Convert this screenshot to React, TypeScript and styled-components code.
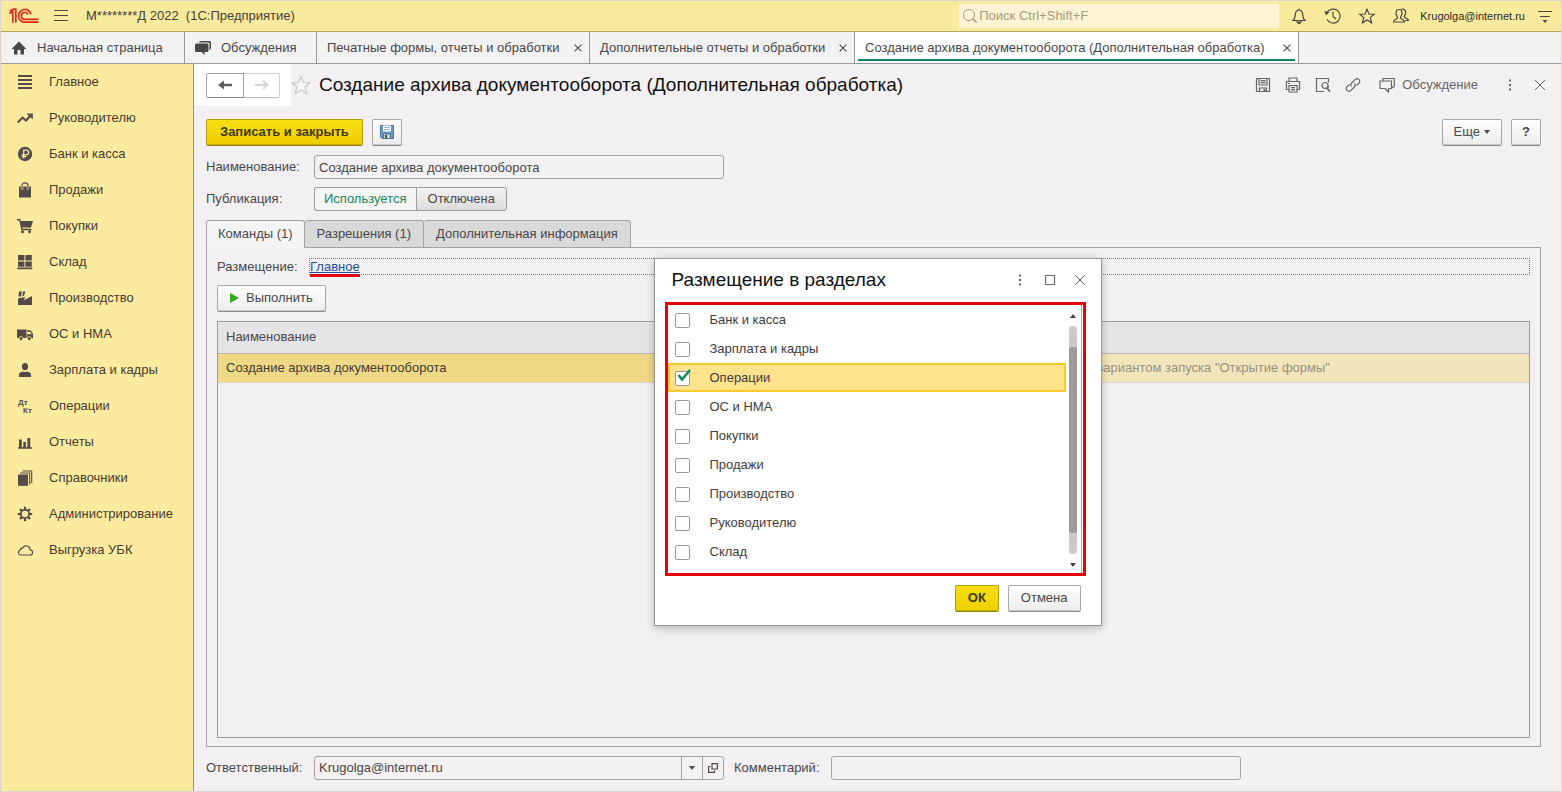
import React from "react";
import styled, { createGlobalStyle, css } from "styled-components";

const GlobalStyle = createGlobalStyle`
  * { box-sizing: border-box; }
  html, body { margin: 0; padding: 0; }
  body, button, input {
    font-family: "Liberation Sans", Arial, sans-serif;
    font-size: 13px;
    line-height: 16px;
    color: #4a4748;
  }
  button { cursor: pointer; }
`;

/* ---------- window frame ---------- */

const Page = styled.div`
  display: flex;
  flex-direction: column;
  min-height: 100vh;
  background: #f2f0f2;
  border: 1px solid #dcd6cc;
`;

const TopBar = styled.header`
  display: flex;
  align-items: center;
  height: 31px;
  padding: 0 9px 0 8px;
  background: #f9eb9e;
  border-bottom: 1px solid #b9a46a;
`;

const IconButton = styled.button`
  display: inline-flex;
  align-items: center;
  justify-content: center;
  padding: 0;
  border: 0;
  background: none;
  color: #4f4645;
  flex: none;
`;

const AppTitle = styled.span`
  flex: 1;
  margin-left: 17px;
  white-space: pre;
  color: #45403a;
`;

const Search = styled.label`
  display: flex;
  align-items: center;
  width: 320px;
  height: 24px;
  padding-left: 3px;
  background: #fcf4d2;
  color: #a39c80;

  input {
    flex: 1;
    min-width: 0;
    padding: 0 1px;
    border: 0;
    outline: 0;
    background: none;
  }
  input::placeholder { color: #a39c80; opacity: 1; }
`;

const TopTools = styled.div`
  display: flex;
  align-items: center;
  gap: 16px;
  margin-left: 11px;
`;

const UserLink = styled.a`
  font-size: 11px;
  color: #2e2a24;
  text-decoration: none;
  margin: 0 -3px 0 -6px;
`;

/* ---------- open window tabs ---------- */

const WindowTabs = styled.nav`
  display: flex;
  height: 32px;
  background: #f3f2f3;
  border-bottom: 1px solid #9b9998;
`;

const WindowTab = styled.div<{ $width: number; $active?: boolean; $section?: boolean }>`
  display: flex;
  align-items: center;
  justify-content: ${(p) => (p.$section ? "flex-start" : "space-between")};
  min-width: ${(p) => p.$width}px;
  padding: 0 7px 0 10px;
  gap: 10px;
  border-right: 1px solid #9b9998;
  color: #4a4748;
  white-space: nowrap;
  ${(p) =>
    p.$active &&
    css`
      background: linear-gradient(#138660, #138660) 3px 27px / calc(100% - 6px) 2px no-repeat #fff;
    `}

  a { color: inherit; text-decoration: none; }
`;

/* ---------- sections panel ---------- */

const Body = styled.div`
  display: flex;
  flex: 1;
`;

const Sidebar = styled.nav`
  flex: none;
  width: 193px;
  background: #faeb9f;
  border-right: 1px solid #a98d6a;
`;

const SectionLink = styled.a`
  display: flex;
  align-items: center;
  gap: 16px;
  height: 36px;
  padding-left: 16px;
  color: #4a3a30;
  text-decoration: none;
  white-space: nowrap;

  svg { color: #544a4a; flex: none; }
`;

/* ---------- form ---------- */

const Main = styled.main`
  position: relative;
  display: flex;
  flex: 1;
  flex-direction: column;
  min-width: 0;
  padding: 0 20px 11px 12px;
`;

const FormHeader = styled.div`
  display: flex;
  align-items: center;
  height: 42px;
  margin-bottom: 13px;
`;

const History = styled.div`
  display: flex;
  align-items: center;
  height: 42px;
  margin-left: -12px;
  padding: 0 11px 0 12px;
  background: #fff;
`;

const HistoryButton = styled.button<{ $dim?: boolean }>`
  display: flex;
  align-items: center;
  justify-content: center;
  width: ${(p) => (p.$dim ? "36px" : "38px")};
  height: 25px;
  padding: 0;
  background: #fff;
  border: 1px solid ${(p) => (p.$dim ? "#cfcfcf" : "#a0a0a0")};
  border-bottom-color: ${(p) => (p.$dim ? "#bdbdbd" : "#8a8a8a")};
  border-left-width: ${(p) => (p.$dim ? "0" : "1px")};
  border-radius: ${(p) => (p.$dim ? "0 2px 2px 0" : "2px 0 0 2px")};
  color: ${(p) => (p.$dim ? "#d6d6d6" : "#5c5c5c")};
`;

const FormTitle = styled.h1`
  flex: 1;
  margin: 0 0 0 8px;
  font-size: 19px;
  line-height: 24px;
  font-weight: 400;
  color: #111;
  white-space: nowrap;
`;

const FormTools = styled.div`
  display: flex;
  align-items: center;
  gap: 14px;
  margin-right: -7px;

  button { color: #666; }
`;

const DiscussButton = styled(IconButton)`
  gap: 7px;
  margin: 0 10px 0 4px;
`;

const Toolbar = styled.div`
  display: flex;
  gap: 9px;
  margin-bottom: 9px;
`;

const Spacer = styled.span`
  flex: 1;
`;

const Button = styled.button<{ $tone?: "primary"; $pad?: number; $gap?: number }>`
  display: inline-flex;
  align-items: center;
  justify-content: center;
  gap: ${(p) => p.$gap ?? 7}px;
  height: 27px;
  padding: 0 ${(p) => p.$pad ?? 12}px 1px;
  border: 1px solid #a9a7a9;
  border-bottom-color: #8a888a;
  border-radius: 2px;
  background: linear-gradient(#fefefe, #ececec);
  box-shadow: inset 0 -1px 0 #c9c7c9;
  white-space: nowrap;
  ${(p) =>
    p.$tone === "primary" &&
    css`
      font-weight: 700;
      color: #43390a;
      border-color: #b09c10;
      border-bottom-color: #8f7e10;
      background: linear-gradient(#f8de12, #edcf00);
      box-shadow: inset 0 -1px 0 #c9b208;
    `}
`;

const FieldRow = styled.div`
  display: flex;
  align-items: center;
  margin-bottom: 8px;
`;

const FooterRow = styled.div`
  display: flex;
  align-items: center;
`;

const FieldLabel = styled.label`
  flex: none;
  width: 108px;
  white-space: nowrap;
`;

const fieldFrame = css`
  height: 24px;
  border: 1px solid #a3a1a3;
  border-radius: 3px;
  background: #f3f1f3;
`;

const TextInput = styled.input`
  ${fieldFrame}
  width: 410px;
  padding: 0 4px;
  outline: 0;
`;

const Combo = styled.div`
  ${fieldFrame}
  display: flex;
  width: 410px;

  input {
    flex: 1;
    min-width: 0;
    padding: 0 4px;
    border: 0;
    outline: 0;
    background: none;
  }
  button {
    width: 21px;
    border-left: 1px solid #a3a1a3;
  }
`;

const CommentLabel = styled.label`
  margin: 0 11px 0 10px;
`;

const Switch = styled.div`
  display: flex;
  height: 24px;
`;

const SwitchButton = styled.button<{ $on?: boolean }>`
  padding: 0 ${(p) => (p.$on ? "9px" : "11px")};
  border: 1px solid #9d9b9d;
  border-radius: ${(p) => (p.$on ? "3px 0 0 3px" : "0 3px 3px 0")};
  border-right-width: ${(p) => (p.$on ? "0" : "1px")};
  background: ${(p) => (p.$on ? "#f6f5f6" : "linear-gradient(#f2f2f2, #dcdcdc)")};
  color: ${(p) => (p.$on ? "#16885a" : "#4a4748")};
`;

const PageTabs = styled.div`
  display: flex;
  height: 28px;
  margin: 1px 0 -1px;
  z-index: 1;
`;

const PageTab = styled.button<{ $active?: boolean }>`
  padding: 0 ${(p) => (p.$active ? "11px" : "12px")};
  border: 1px solid #a3a1a3;
  border-left-width: ${(p) => (p.$active ? "1px" : "0")};
  border-bottom-color: ${(p) => (p.$active ? "#f5f4f5" : "#a3a1a3")};
  border-radius: 3px 3px 0 0;
  background: ${(p) => (p.$active ? "#f5f4f5" : "#d9d9d9")};
  white-space: nowrap;
`;

const Panel = styled.section`
  display: flex;
  flex: 1;
  flex-direction: column;
  padding: 10px 10px 8px;
  margin-bottom: 9px;
  border: 1px solid #a3a1a3;
`;

const PlacementRow = styled.div`
  display: flex;
  align-items: center;
  margin-bottom: 10px;
`;

const PlacementLabel = styled.span`
  width: 92px;
`;

const PlacementBox = styled.div`
  display: flex;
  flex: 1;
  height: 17px;
  border: 1px dotted #777;
`;

const PlacementLink = styled.a`
  height: 18px;
  color: #23509b;
  text-decoration: underline;
  border-bottom: 3px solid #e30613;
`;

const ButtonRow = styled.div`
  display: flex;
  margin-bottom: 9px;
`;

const TableFrame = styled.div`
  flex: 1;
  border: 1px solid #9b9a9c;
`;

const Table = styled.table`
  width: 100%;
  table-layout: fixed;
  border-collapse: collapse;

  th, td {
    padding: 0 8px;
    text-align: left;
    font-weight: 400;
    white-space: nowrap;
  }
  th {
    height: 31px;
    background: #e6e4e6;
    border-bottom: 1px solid #b5b4b4;
  }
  th:first-child { width: 53%; }
  td {
    height: 29px;
    background: #efd987;
    color: #443c33;
    border-bottom: 1px solid #d9d6cc;
  }
  td:last-child {
    background: #f2e5bc;
    color: #979080;
  }
`;

/* ---------- placement dialog ---------- */

const DialogLayer = styled.div`
  position: absolute;
  inset: 28px 0 0 0;
  display: flex;
  align-items: center;
  justify-content: center;
  z-index: 2;
`;

const Dialog = styled.section`
  display: flex;
  flex-direction: column;
  width: 448px;
  padding: 0 15px 13px 10px;
  background: #fff;
  border: 1px solid #98969a;
  box-shadow: 0 2px 8px rgba(0, 0, 0, 0.25);
`;

const DialogHeader = styled.div`
  display: flex;
  align-items: center;
  height: 43px;
  margin-right: -2px;
  padding-left: 7px;
  gap: 14px;

  h2 {
    flex: 1;
    margin: 0;
    font-size: 19px;
    line-height: 24px;
    font-weight: 400;
    color: #111;
  }
  button { color: #666; }
`;

const Highlight = styled.div`
  display: flex;
  height: 274px;
  border: 3px solid #e60009;
`;

const SectionList = styled.ul`
  flex: 1;
  margin: 0;
  padding: 0;
  list-style: none;
`;

const SectionOption = styled.li<{ $selected?: boolean }>`
  height: 29px;
  border: 2px solid ${(p) => (p.$selected ? "#f6c92e" : "transparent")};
  background: ${(p) => (p.$selected ? "#fee28c" : "none")};

  label {
    position: relative;
    display: flex;
    align-items: center;
    gap: 20px;
    height: 100%;
    padding: 2px 0 0 5px;
    color: #3f3c3d;
  }
  svg {
    position: absolute;
    left: 6px;
    top: 3px;
    pointer-events: none;
  }
`;

const Checkbox = styled.input`
  appearance: none;
  width: 15px;
  height: 15px;
  margin: 0;
  border: 1px solid #9a989a;
  border-radius: 2px;
  background: #fff;
`;

const ScrollBar = styled.div`
  display: flex;
  flex-direction: column;
  align-items: center;
  width: 16px;
  margin-right: 1px;
  padding: 9px 4px 6px 3px;
  border-right: 1px solid #a3a1a3;
  color: #444;
`;

const ScrollTrack = styled.div`
  flex: 1;
  width: 8px;
  margin: 8px 0 9px;
  padding: 21px 0;
  border-radius: 4px;
  background: #cbcacb;
`;

const ScrollThumb = styled.div`
  height: 100%;
  border-radius: 2px;
  background: #9d9b9d;
`;

const DialogButtons = styled.div`
  display: flex;
  justify-content: flex-end;
  gap: 9px;
  margin: 9px 5px 0 0;
`;

/* ---------- icons ---------- */

const Icon = ({ size = 16, fill, width = 1, children }: { size?: number; fill?: boolean; width?: number; children: React.ReactNode }) => (
  <svg
    width={size}
    height={size}
    viewBox={`0 0 ${size} ${size}`}
    fill={fill ? "currentColor" : "none"}
    stroke={fill ? "none" : "currentColor"}
    strokeWidth={width}
    aria-hidden="true"
  >
    {children}
  </svg>
);

const Logo = () => (
  <svg width="30" height="16" viewBox="0 0 30 16" fill="none" stroke="#dc2a1c" strokeWidth="1.7" aria-label="1C">
    <path d="M0.5 5.4 L3.8 3.4 V14.8 M0.6 3 L4.6 1.2 H6.8 V14.8" />
    <path d="M21.8 6.2 A6.2 6.4 0 1 0 15.800 14.200 H29.400" />
    <path d="M18.800 6.600 A3.300 3.500 0 1 0 15.800 11.300 H29.400" />
  </svg>
);

const CloseIcon = () => (
  <Icon size={8} width={1.1}>
    <path d="M.6 .6L7.4 7.4M7.4 .6L.6 7.4" />
  </Icon>
);

const DotsIcon = () => (
  <Icon fill>
    <path d="M7 2.5h2v2H7zM7 7h2v2H7zM7 11.5h2v2H7z" />
  </Icon>
);

const CaretIcon = ({ up }: { up?: boolean }) => (
  <svg width="6" height="4" viewBox="0 0 6 4" fill="currentColor" aria-hidden="true">
    <path d={up ? "M0 4L3 0L6 4z" : "M0 0H6L3 4z"} />
  </svg>
);

const StarPath = "M8 1.2 L10 6 L15.2 6.3 L11.2 9.6 L12.6 14.8 L8 11.9 L3.4 14.8 L4.8 9.6 L.8 6.3 L6 6 Z";

const gearTeeth = [0, 45, 90, 135, 180, 225, 270, 315];

const sections: { title: string; icon: React.ReactNode }[] = [
  { title: "Главное", icon: <Icon fill><path d="M1 1h14v2H1zM1 5h14v2H1zM1 9h14v2H1zM1 13h14v2H1z" /></Icon> },
  { title: "Руководителю", icon: <Icon width={2}><path d="M.7 12.5L5.5 7.5L9 10.5L14 5" /><path d="M9.5 3.5H15.8V9.5z" fill="currentColor" stroke="none" /></Icon> },
  {
    title: "Банк и касса",
    icon: (
      <Icon>
        <circle cx="8" cy="8" r="7.2" fill="currentColor" stroke="none" />
        <path d="M6.7 12.5V4.2H9.3A2.3 2.3 0 0 1 9.3 8.8H4.7M4.7 10.7H9.3" stroke="#faeb9f" strokeWidth="1.2" />
      </Icon>
    ),
  },
  { title: "Продажи", icon: <Icon><path d="M2 4.5H14V15.5H2z" fill="currentColor" stroke="none" /><path d="M5 7.5V3.5A3 2.6 0 0 1 11 3.5V7.5" stroke="#faeb9f" strokeWidth="2.4" /><path d="M5 7V3.6A3 2.7 0 0 1 11 3.6V7" strokeWidth="1.2" /></Icon> },
  { title: "Покупки", icon: <Icon><path d="M3.5 3H16L14 9.5H5z" fill="currentColor" stroke="none" /><path d="M0 1.7H2.8L5 11.5H14.5" strokeWidth="1.4" /><circle cx="5.5" cy="13.7" r="1.5" fill="currentColor" stroke="none" /><circle cx="12.5" cy="13.7" r="1.5" fill="currentColor" stroke="none" /></Icon> },
  { title: "Склад", icon: <Icon fill><path d="M1 1h6.4v5.5H1zM8.4 1h6.4v5.5H8.4zM1 7.4h6.4v5.3H1zM8.4 7.4h6.4v5.3H8.4zM.3 13.4h15v1.8H.3z" /></Icon> },
  { title: "Производство", icon: <Icon fill><path d="M1 8.500L8 7L7 10.300L15 6V15H1zM2 1.500H4.800L4.200 6.500H1.500zM6 1.500H8.600L6.800 6H5.500z" /></Icon> },
  { title: "ОС и НМА", icon: <Icon><path d="M0 3.5H9.5V12H0z" fill="currentColor" stroke="none" /><path d="M10 5H13.3L15.4 8V11.5H10" strokeWidth="1.3" /><path d="M10 8.2H15.5V12H10z" fill="currentColor" stroke="none" /><circle cx="4" cy="12.5" r="2" fill="currentColor" stroke="#faeb9f" strokeWidth="0.8" /><circle cx="12.3" cy="12.5" r="2" fill="currentColor" stroke="#faeb9f" strokeWidth="0.8" /></Icon> },
  { title: "Зарплата и кадры", icon: <Icon fill><ellipse cx="8" cy="4.6" rx="3.1" ry="3.7" /><path d="M2 15V12.4C2 10.6 4 10 6 9.4Q8 10.6 10 9.4C12 10 14 10.6 14 12.4V15z" /></Icon> },
  {
    title: "Операции",
    icon: (
      <Icon fill>
        <text x="1" y="7" fontSize="8" fontWeight="700">Дт</text>
        <text x="6" y="15" fontSize="8" fontWeight="700">Кт</text>
      </Icon>
    ),
  },
  { title: "Отчеты", icon: <Icon fill><path d="M1 13.3h14v1.4H1zM2 5.5h2.8v8H2zM6.3 8h2.6v6H6.3zM10.4 4h2.8v10h-2.8z" /></Icon> },
  { title: "Справочники", icon: <Icon><path d="M1 4.5H11V15.8H1z" fill="currentColor" stroke="none" /><path d="M3 3H12.7V14.5M5.5 1H14.7V13" strokeWidth="1.1" /></Icon> },
  {
    title: "Администрирование",
    icon: (
      <Icon>
        <circle cx="8" cy="8" r="4.2" strokeWidth="1.8" />
        {gearTeeth.map((a) => (
          <path key={a} d="M8 .8V3.4" strokeWidth="2.2" transform={`rotate(${a} 8 8)`} />
        ))}
      </Icon>
    ),
  },
  { title: "Выгрузка УБК", icon: <Icon width={1.2}><path d="M3.5 13H12.8A2.6 2.6 0 0 0 13.2 7.8A4 4 0 0 0 5.8 5.8A2.8 2.8 0 0 0 3 8.2A2.5 2.5 0 0 0 3.5 13z" /></Icon> },
];

const options = ["Банк и касса", "Зарплата и кадры", "Операции", "ОС и НМА", "Покупки", "Продажи", "Производство", "Руководителю", "Склад"];

const windows = [
  { title: "Печатные формы, отчеты и обработки", width: 273 },
  { title: "Дополнительные отчеты и обработки", width: 265 },
  { title: "Создание архива документооборота (Дополнительная обработка)", width: 444, active: true },
];

export default function App() {
  return (
    <Page>
      <GlobalStyle />
      <TopBar>
        <Logo />
        <IconButton aria-label="Меню">
          <svg width="30" height="14" viewBox="0 0 30 14" stroke="currentColor" strokeWidth="1.2" aria-hidden="true">
            <path d="M15 1.5H29M15 6.5H29M15 11.5H29" />
          </svg>
        </IconButton>
        <AppTitle>{"М********Д 2022  (1С:Предприятие)"}</AppTitle>
        <Search>
          <Icon><circle cx="7" cy="7" r="5.6" /><path d="M11 11L14.5 14.5" strokeWidth="1.6" /></Icon>
          <input type="search" placeholder="Поиск Ctrl+Shift+F" aria-label="Поиск" />
        </Search>
        <TopTools>
          <IconButton aria-label="Уведомления">
            <Icon size={18} width={1.2}><path d="M9 1.5V3M3 13.5C5.5 11.5 5 8.6 5.500 6.200C6 3.800 7.600 3 9 3S12 3.800 12.500 6.200C13 8.600 12.500 11.500 15 13.500Z" /><path d="M7 15H11L9 16.7z" fill="currentColor" /></Icon>
          </IconButton>
          <IconButton aria-label="История">
            <Icon size={18} width={1.2}><path d="M2.6 6.5A7 7 0 1 1 3 12.5M9 4.5V9.5L12 12" /><path d="M.3 4L5.3 5.3L2 8.5z" fill="currentColor" stroke="none" /></Icon>
          </IconButton>
          <IconButton aria-label="Избранное">
            <Icon size={18} width={1.2}><g transform="translate(1 1)"><path d={StarPath} /></g></Icon>
          </IconButton>
          <IconButton aria-label="Пользователь">
            <Icon size={18} width={1.2}><path d="M1.500 15C1.500 12 5 12.500 5.500 11C5.800 10 4 9 4 6C4 3.500 5.300 2.500 7 2.500S10 3.500 10 6C10 9 8.200 10 8.500 11C9 12.500 12.500 12 12.500 15Z" /><path d="M9.500 2.200C12.500 1.800 14 3.300 13.700 6C13.500 8 12 9 12.300 10C13.500 11.200 16 11 16.500 13.500H13" /></Icon>
          </IconButton>
          <UserLink href="#user">Krugolga@internet.ru</UserLink>
          <IconButton aria-label="Настройки">
            <Icon size={14} width={1.2}><path d="M0 2.500H14M2 7.500H12" /><path d="M4.500 11H9.500L7 14z" fill="currentColor" stroke="none" /></Icon>
          </IconButton>
        </TopTools>
      </TopBar>

      <WindowTabs>
        <WindowTab $section $width={184}>
          <Icon fill><path d="M8 1.5L15.5 9H13V14.5H9.5V10H6.5V14.5H3V9H.5z" /></Icon>
          <a href="#home">Начальная страница</a>
        </WindowTab>
        <WindowTab $section $width={132}>
          <Icon fill><path d="M5.500 1H14.500A1.500 1.500 0 0 1 16 2.500V8A2 2 0 0 1 14.500 10V4A1.500 1.500 0 0 0 13 2.500H4A1.500 1.500 0 0 1 5.500 1z" /><path d="M1.500 3.500H12A1.500 1.500 0 0 1 13.500 5V10.500A1.500 1.500 0 0 1 12 12H9.500V15L6.500 12H1.500A1.500 1.500 0 0 1 0 10.500V5A1.500 1.500 0 0 1 1.500 3.500z" /></Icon>
          <a href="#talks">Обсуждения</a>
        </WindowTab>
        {windows.map((w) => (
          <WindowTab key={w.title} $width={w.width} $active={w.active}>
            <a href="#window">{w.title}</a>
            <IconButton aria-label="Закрыть"><CloseIcon /></IconButton>
          </WindowTab>
        ))}
      </WindowTabs>

      <Body>
        <Sidebar>
          {sections.map((s) => (
            <SectionLink key={s.title} href="#section">
              {s.icon}
              {s.title}
            </SectionLink>
          ))}
        </Sidebar>

        <Main>
          <FormHeader>
            <History>
              <HistoryButton aria-label="Назад">
                <Icon width={2.4}><path d="M5 8H15" /><path d="M7 3.5V12.5L1 8z" fill="currentColor" stroke="none" /></Icon>
              </HistoryButton>
              <HistoryButton $dim aria-label="Вперед">
                <Icon width={2}><path d="M1 8H13M9 4L13.5 8L9 12" /></Icon>
              </HistoryButton>
            </History>
            <IconButton aria-label="В избранное">
              <svg width="20" height="20" viewBox="0 0 16 16" fill="#f7f6f7" stroke="#c8c6c8" strokeWidth="0.9" aria-hidden="true"><path d={StarPath} /></svg>
            </IconButton>
            <FormTitle>Создание архива документооборота (Дополнительная обработка)</FormTitle>
            <FormTools>
              <IconButton aria-label="Сохранить">
                <Icon width={1.2}><path d="M1.5 1.5H14.5V14.5H1.5zM4 1.5V8H12V1.5M5.5 3.7H10.5M5.5 5.7H10.5M4.5 14.5V11H11.5V14.5" /><path d="M8.5 12H10.5V14.5H8.5z" fill="currentColor" stroke="none" /></Icon>
              </IconButton>
              <IconButton aria-label="Печать">
                <Icon width={1.2}><path d="M4 4.5V1H12V4.5M4 12.5H1.5V4.5H14.5V12.5H12M4 8.5H12V15H4zM6 10.7H10M6 12.7H10M3 6.5H5" /></Icon>
              </IconButton>
              <IconButton aria-label="Просмотр">
                <Icon width={1.2}><path d="M13.500 5.500V1.500H1.500V14.500H9M13.500 10.500V9" /><circle cx="10" cy="8.500" r="3" /><path d="M12 11L15 14.800" strokeWidth="1.800" /></Icon>
              </IconButton>
              <IconButton aria-label="Ссылка">
                <Icon width={1.2}><path d="M6.5 9.5A2.6 2.6 0 0 1 6.7 6L10.5 2.2A2.7 2.7 0 0 1 14.2 6L11.5 8.7M9.5 6.5A2.6 2.6 0 0 1 9.3 10L5.5 13.8A2.7 2.7 0 0 1 1.8 10L4.5 7.3" /></Icon>
              </IconButton>
              <DiscussButton>
                <Icon width={1.2}><path d="M4 3.5V1.5H15.3V9.5L13 11V9.5M1 4H12.5V11.5H9.500V15L6 11.5H1z" /></Icon>
                Обсуждение
              </DiscussButton>
              <IconButton aria-label="Действия"><DotsIcon /></IconButton>
              <IconButton aria-label="Закрыть форму"><Icon><path d="M3 3L13 13M13 3L3 13" /></Icon></IconButton>
            </FormTools>
          </FormHeader>

          <Toolbar>
            <Button $tone="primary" $pad={13}>Записать и закрыть</Button>
            <Button $pad={6} aria-label="Записать">
              <Icon>
                <path d="M1.5 1.5H14.5V14.5H3L1.5 13z" fill="#6b9bc6" stroke="#45719b" />
                <path d="M4 1.5H12V7.5H4z" fill="#fff" stroke="none" />
                <path d="M5 3.5H11M5 5.5H11" stroke="#8fb0cc" />
                <path d="M4.5 10H11.5V14.5H4.5z" fill="#d5d8cf" stroke="#5a6f80" />
                <path d="M6 11H8V14H6z" fill="#41586b" stroke="none" />
              </Icon>
            </Button>
            <Spacer />
            <Button $pad={11} $gap={4}>Еще <CaretIcon /></Button>
            <Button $pad={10} aria-label="Справка"><b>?</b></Button>
          </Toolbar>

          <FieldRow>
            <FieldLabel htmlFor="name">Наименование:</FieldLabel>
            <TextInput id="name" defaultValue="Создание архива документооборота" />
          </FieldRow>
          <FieldRow>
            <FieldLabel as="span">Публикация:</FieldLabel>
            <Switch role="group" aria-label="Публикация">
              <SwitchButton $on aria-pressed="true">Используется</SwitchButton>
              <SwitchButton aria-pressed="false">Отключена</SwitchButton>
            </Switch>
          </FieldRow>

          <PageTabs role="tablist">
            <PageTab $active role="tab">Команды (1)</PageTab>
            <PageTab role="tab">Разрешения (1)</PageTab>
            <PageTab role="tab">Дополнительная информация</PageTab>
          </PageTabs>
          <Panel>
            <PlacementRow>
              <PlacementLabel>Размещение:</PlacementLabel>
              <PlacementBox><PlacementLink href="#placement">Главное</PlacementLink></PlacementBox>
            </PlacementRow>
            <ButtonRow>
              <Button $gap={6}>
                <Icon size={10} fill><path d="M0 0L9 5L0 10z" fill="#33a81e" /></Icon>
                Выполнить
              </Button>
            </ButtonRow>
            <TableFrame>
              <Table>
                <thead>
                  <tr><th>Наименование</th><th aria-label="Быстрый доступ" /></tr>
                </thead>
                <tbody>
                  <tr>
                    <td>Создание архива документооборота</td>
                    <td>Не применимо для команд с вариантом запуска "Открытие формы"</td>
                  </tr>
                </tbody>
              </Table>
            </TableFrame>
          </Panel>

          <FooterRow>
            <FieldLabel htmlFor="owner">Ответственный:</FieldLabel>
            <Combo>
              <input id="owner" defaultValue="Krugolga@internet.ru" />
              <IconButton aria-label="Выбрать"><CaretIcon /></IconButton>
              <IconButton aria-label="Открыть"><Icon size={10} width={1.2}><path d="M4 .6H9.4V6H4zM2.5 3.5H.6V9.4H6.5V7.5" /></Icon></IconButton>
            </Combo>
            <CommentLabel htmlFor="comment">Комментарий:</CommentLabel>
            <TextInput id="comment" />
          </FooterRow>

          <DialogLayer>
            <Dialog role="dialog" aria-labelledby="dialog-title">
              <DialogHeader>
                <h2 id="dialog-title">Размещение в разделах</h2>
                <IconButton aria-label="Действия"><DotsIcon /></IconButton>
                <IconButton aria-label="Развернуть"><Icon width={1.2}><path d="M3.5 3.5H12.5V12.5H3.5z" /></Icon></IconButton>
                <IconButton aria-label="Закрыть окно"><Icon><path d="M3 3L13 13M13 3L3 13" /></Icon></IconButton>
              </DialogHeader>
              <Highlight>
                <SectionList>
                  {options.map((o) => {
                    const on = o === "Операции";
                    return (
                      <SectionOption key={o} $selected={on}>
                        <label>
                          <Checkbox type="checkbox" defaultChecked={on} />
                          {o}
                          {on && (
                            <svg width="16" height="16" viewBox="0 0 16 16" fill="none" stroke="#15895f" strokeWidth="2.6" aria-hidden="true">
                              <path d="M2.5 7L6 11.5L14 2" />
                            </svg>
                          )}
                        </label>
                      </SectionOption>
                    );
                  })}
                </SectionList>
                <ScrollBar>
                  <CaretIcon up />
                  <ScrollTrack><ScrollThumb /></ScrollTrack>
                  <CaretIcon />
                </ScrollBar>
              </Highlight>
              <DialogButtons>
                <Button $tone="primary">ОК</Button>
                <Button>Отмена</Button>
              </DialogButtons>
            </Dialog>
          </DialogLayer>
        </Main>
      </Body>
    </Page>
  );
}
